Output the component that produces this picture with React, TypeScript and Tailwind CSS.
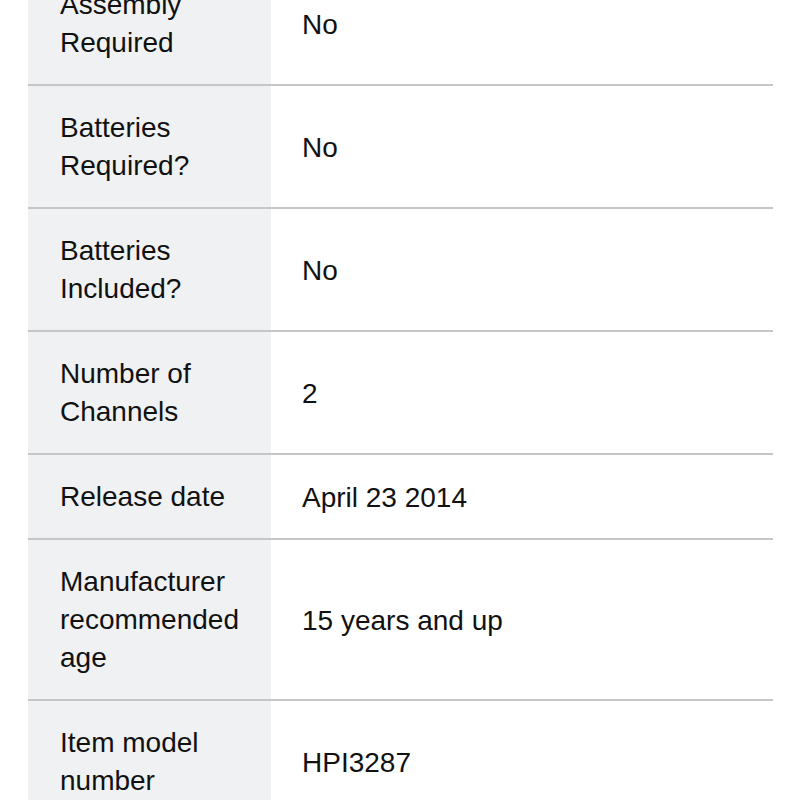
const rows: [string[], string][] = [
  [["Assembly", "Required"], "No"],
  [["Batteries", "Required?"], "No"],
  [["Batteries", "Included?"], "No"],
  [["Number of", "Channels"], "2"],
  [["Release date"], "April 23 2014"],
  [["Manufacturer", "recommended", "age"], "15 years and up"],
  [["Item model", "number"], "HPI3287"],
]

export default function App() {
  return (
    <div className="h-[800px] w-[800px] overflow-hidden bg-white">
      <div
        className="ml-[28px] mt-[-37px] w-[745px] text-[28px] leading-[38px] text-[#111111]"
        style={{ fontFamily: '"Liberation Sans", Arial, sans-serif' }}
      >
        {rows.map(([label, value]) => (
          <div key={label.join(" ")} className="flex border-b-2 border-[#c6c6c6]">
            {/* label cell */}
            <div className="w-[243px] shrink-0 bg-[#f0f1f3] pb-[22px] pl-[32px] pr-[20px] pt-[23px]">
              {label.map((line) => (
                <div key={line}>{line}</div>
              ))}
            </div>
            {/* value cell */}
            <div className="flex flex-1 items-center pl-[31px] pt-[2px]">{value}</div>
          </div>
        ))}
      </div>
    </div>
  )
}
